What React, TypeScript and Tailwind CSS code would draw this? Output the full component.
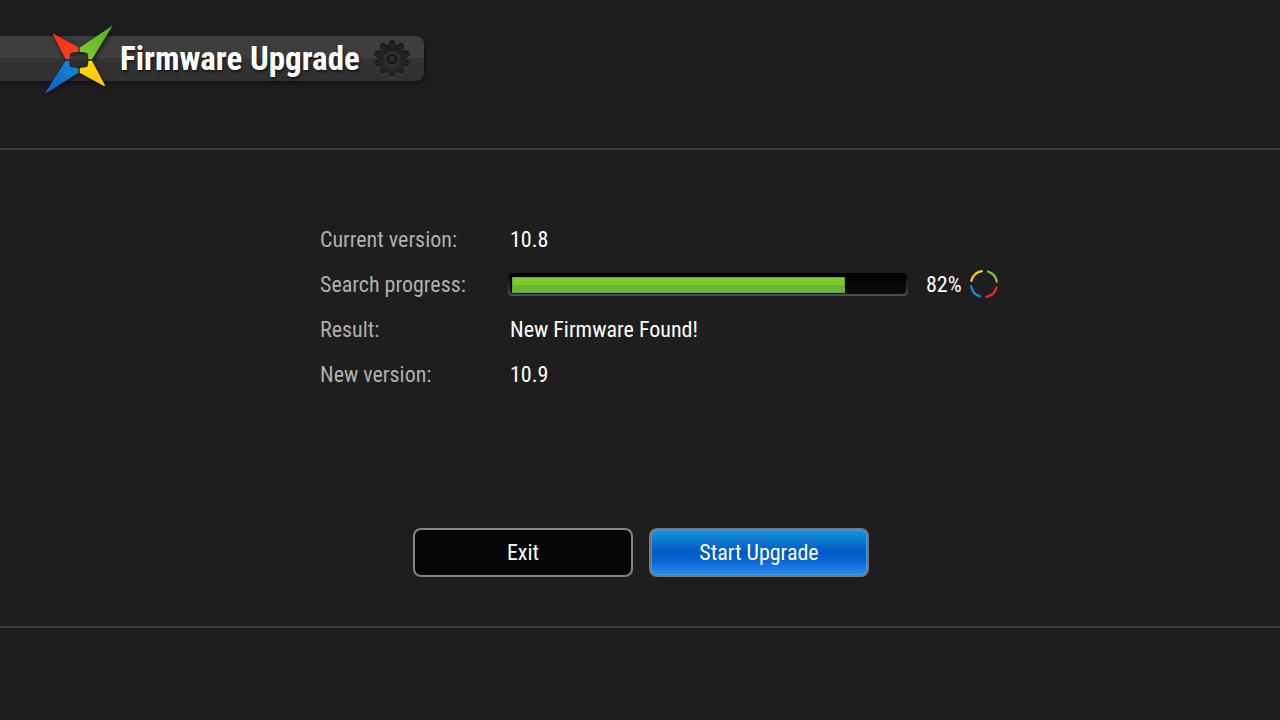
import type { ReactNode } from "react";

const TEETH = [0, 36, 72, 108, 144, 180, 216, 252, 288, 324];

function Logo() {
  return (
    <svg viewBox="0 0 252 252" className="relative z-10 -my-5 size-[84px] shrink-0 drop-shadow-[1px_2px_2px_rgba(0,0,0,0.6)]" aria-hidden="true">
      <defs>
        <linearGradient id="red" x1="0" y1="0" x2="1" y2="1">
          <stop offset="0" stopColor="#ff2a12" />
          <stop offset="1" stopColor="#f04a26" />
        </linearGradient>
        <linearGradient id="green" x1="1" y1="0" x2="0" y2="1">
          <stop offset="0" stopColor="#4fae1c" />
          <stop offset="1" stopColor="#86cc38" />
        </linearGradient>
        <linearGradient id="blue" x1="0" y1="1" x2="1" y2="0">
          <stop offset="0" stopColor="#0a5fc4" />
          <stop offset="1" stopColor="#1d87d6" />
        </linearGradient>
        <linearGradient id="yellow" x1="1" y1="1" x2="0" y2="0">
          <stop offset="0" stopColor="#ffc400" />
          <stop offset="1" stopColor="#ffdd08" />
        </linearGradient>
        <linearGradient id="core" x1="0" y1="0" x2="0" y2="1">
          <stop offset="0" stopColor="#202020" />
          <stop offset="0.4" stopColor="#3a3a3a" />
          <stop offset="0.5" stopColor="#303030" />
          <stop offset="1" stopColor="#2c2c2c" />
        </linearGradient>
      </defs>
      <path d="M101 107 Q128 102 155 107 Q159 129 155 149 Q128 155 101 149 Q97 129 101 107Z" fill="url(#core)" stroke="#1a1a1a" strokeWidth="4" />
      <path d="M50 51Q51 49 54 51L127 91V105Q114 105 103 108Q100 117 101 127H89Z" fill="url(#red)" />
      <path d="M229 28Q227 26 224 29L131 92V105Q144 105 154 108Q157 117 157 127H168Z" fill="url(#green)" />
      <path d="M28 227Q28 231 32 228L127 167V153Q113 152 102 149Q100 140 101 131H89Z" fill="url(#blue)" />
      <path d="M207 205Q206 208 202 206L131 167V153Q144 152 154 149Q157 140 157 131H168Z" fill="url(#yellow)" />
    </svg>
  );
}

function Gear() {
  return (
    <svg viewBox="-20 -20 40 40" className="size-10 shrink-0" aria-hidden="true">
      <defs>
        <linearGradient id="gear" x1="0" y1="0" x2="0" y2="1">
          <stop offset="0" stopColor="#1d1d1d" />
          <stop offset="1" stopColor="#292929" />
        </linearGradient>
      </defs>
      <g fill="#464646" transform="translate(0 1)">
        <circle r="13" />
        {TEETH.map((a) => (
          <path key={a} d="M-4.2 -12L-2.4 -17.4Q-2 -18 -1.4 -18H1.4Q2 -18 2.4 -17.4L4.2 -12Z" transform={`rotate(${a})`} />
        ))}
      </g>
      <g fill="#101010" transform="translate(0 -0.5)">
        <circle r="13" />
        {TEETH.map((a) => (
          <path key={a} d="M-4.2 -12L-2.4 -17.4Q-2 -18 -1.4 -18H1.4Q2 -18 2.4 -17.4L4.2 -12Z" transform={`rotate(${a})`} />
        ))}
      </g>
      <g fill="#222" transform="translate(0 0.4)">
        <circle r="13" fill="url(#gear)" />
        {TEETH.map((a) => (
          <path key={a} d="M-3.8 -12L-2.1 -16.8Q-1.8 -17.5 -1.2 -17.5H1.2Q1.8 -17.5 2.1 -16.8L3.8 -12Z" transform={`rotate(${a})`} />
        ))}
      </g>
      <circle r="7.3" fill="#303030" stroke="#3d3d3d" strokeWidth="0.8" />
      <circle r="4.4" fill="#2c2c2c" stroke="#141414" strokeWidth="1.6" />
    </svg>
  );
}

function Spinner() {
  return (
    <svg viewBox="-18 -18 36 36" className="size-9 shrink-0" fill="none" strokeWidth="2.3" strokeLinecap="round" aria-hidden="true">
      <path d="M-12.6 -4.2A13 13 0 0 1 -2.3 -13.9" stroke="#f5cf16" />
      <path d="M4 -13.5A13 13 0 0 1 12.8 -3.4" stroke="#8cc03c" />
      <path d="M12.6 2.4A13 13 0 0 1 2.3 11.8" stroke="#ea2230" />
      <path d="M-4 11.4A13 13 0 0 1 -12.8 1.2" stroke="#2284cc" />
    </svg>
  );
}

function Row({ label, children }: { label: string; children: ReactNode }) {
  return (
    <div className="flex h-[45px] items-center">
      <dt className="w-[190px] shrink-0 text-[#b0b0b0]">{label}</dt>
      <dd className="flex flex-1 items-center">{children}</dd>
    </div>
  );
}

export default function App() {
  const progress = 82;
  return (
    <div className="flex min-h-screen flex-col bg-[#1e1e1e] font-['Roboto_Condensed','Roboto',sans-serif] text-[22px] leading-7 text-white">
      <header className="flex h-[150px] items-start border-b-2 border-[#3c3c3c] pt-9">
        <div className="flex h-[45px] items-center rounded-r-lg bg-[linear-gradient(#3c3c3c,#3f3f3f_50%,#333_50%,#303030)] pr-3 pl-9 shadow-[1px_2px_5px_rgba(0,0,0,0.5)]">
          <Logo />
          <h1 className="mr-3 text-[33px] leading-9 font-bold whitespace-nowrap [text-shadow:1px_2px_3px_rgba(0,0,0,0.6)]">Firmware Upgrade</h1>
          <Gear />
        </div>
      </header>

      <main className="flex flex-1 flex-col items-center pt-[67px]">
        <dl className="w-full max-w-[640px]">
          <Row label="Current version:">10.8</Row>
          <Row label="Search progress:">
            <div
              role="progressbar"
              aria-label="Search progress"
              aria-valuenow={progress}
              aria-valuemin={0}
              aria-valuemax={100}
              className="-ml-0.5 w-[400px] shrink-0 rounded bg-[linear-gradient(#050505,#2e2e2e_60%,#505050)] px-0.5 pb-0.5"
            >
              <div className="h-[21px] rounded-sm bg-[linear-gradient(#000,#0b0b0b)] px-0.5 pt-1">
                <div
                  className="h-4 border border-[#5fae2c] bg-[linear-gradient(#7ccb2c_50%,#66b534_50%)]"
                  style={{ width: `${progress + 3}%` }}
                />
              </div>
            </div>
            <span className="mr-1 ml-[18px]">{progress}%</span>
            <Spinner />
          </Row>
          <Row label="Result:">New Firmware Found!</Row>
          <Row label="New version:">10.9</Row>
        </dl>

        <div className="mt-auto mb-[49px] flex gap-4 pl-0.5">
          <button type="button" className="h-[49px] w-[220px] rounded-lg border-2 border-[#858585] bg-[#050505]">
            Exit
          </button>
          <button
            type="button"
            className="h-[49px] w-[220px] rounded-lg border-2 border-[#777] bg-[linear-gradient(#1b90d8,#0f7cd0_20%,#0059c8_50%,#0c68d8_72%,#2f8cee)] shadow-[inset_0_0_1px_1px_#2fa0f0]"
          >
            Start Upgrade
          </button>
        </div>
      </main>

      <footer className="h-[94px] border-t-2 border-[#3c3c3c]" />
    </div>
  );
}
